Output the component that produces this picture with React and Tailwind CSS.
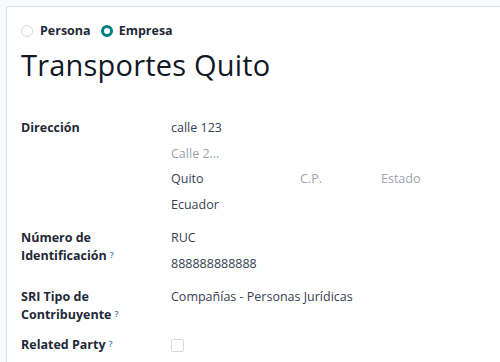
import React from "react";

function Help() {
  return <sup className="ml-[3px] text-[9px] font-semibold text-[#3a7ab8] relative -top-[2px]">?</sup>;
}

export default function App() {
  const font = { fontFamily: '"Open Sans", "Noto Sans", sans-serif' };
  return (
    <div className="w-[500px] h-[362px] overflow-hidden bg-[#f8f9fa]" style={font}>
      <div className="ml-[6px] mt-[6px] h-[400px] w-[520px] bg-white border-l border-t border-[#dcdee2] rounded-tl-[4px] pl-[14px] pt-[17px]">
        {/* radios */}
        <div className="flex items-center h-[14px] text-[12.5px] font-bold text-[#1f2937]">
          <span className="w-[12px] h-[12px] rounded-full border border-[#d6d8dc] bg-white"></span>
          <span className="ml-[7px]">Persona</span>
          <span className="ml-[10px] w-[12px] h-[12px] rounded-full border-[3.5px] border-[#01807f] bg-white"></span>
          <span className="ml-[6px]">Empresa</span>
        </div>
        {/* title */}
        <h1 className="mt-[9px] text-[29px] leading-[36px] text-[#111827] font-normal tracking-[0.2px]">Transportes Quito</h1>

        <div className="mt-[36px] text-[12.5px] leading-[18px]">
          {/* Dirección */}
          <div className="flex">
            <div className="w-[150px] shrink-0 font-bold text-[#1f2937]">Dirección</div>
            <div className="flex flex-col text-[#374151]">
              <div className="h-[26px]">calle 123</div>
              <div className="h-[25px] text-[#9ca3af]">Calle 2...</div>
              <div className="h-[26px] flex">
                <span className="w-[129px]">Quito</span>
                <span className="w-[81px] text-[#9ca3af]">C.P.</span>
                <span className="text-[#9ca3af]">Estado</span>
              </div>
              <div className="h-[25px]">Ecuador</div>
            </div>
          </div>
          {/* Número */}
          <div className="flex mt-[8px]">
            <div className="w-[150px] shrink-0 font-bold text-[#1f2937]">
              Número de<br />Identificación<Help />
            </div>
            <div className="flex flex-col text-[#374151]">
              <div className="h-[26px]">RUC</div>
              <div className="h-[26px]">888888888888</div>
            </div>
          </div>
          {/* SRI */}
          <div className="flex mt-[7px]">
            <div className="w-[150px] shrink-0 font-bold text-[#1f2937]">
              SRI Tipo de<br />Contribuyente<Help />
            </div>
            <div className="text-[#374151]">Compañías - Personas Jurídicas</div>
          </div>
          {/* Related */}
          <div className="flex mt-[12px] items-center">
            <div className="w-[150px] shrink-0 font-bold text-[#1f2937]">
              Related Party<Help />
            </div>
            <span className="w-[13px] h-[13px] border border-[#d6d8dc] rounded-[2px] bg-white"></span>
          </div>
        </div>
      </div>
    </div>
  );
}
